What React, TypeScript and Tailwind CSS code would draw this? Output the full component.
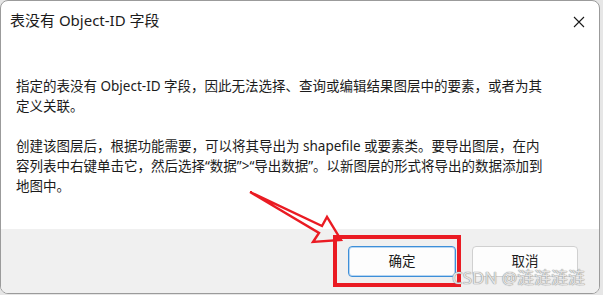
import React from 'react';

const font = {
  fontFamily: '"Noto Sans", "Noto Sans CJK SC", sans-serif',
};

function CloseIcon() {
  return (
    <svg width="12" height="12" viewBox="0 0 12 12" className="text-[#1a1a1a]">
      <path d="M1 1 L11 11 M11 1 L1 11" stroke="currentColor" strokeWidth="1.1" fill="none" />
    </svg>
  );
}

// red annotation: hollow arrow + box around the OK button
function Annotation() {
  return (
    <svg className="absolute inset-0 pointer-events-none" width="603" height="295" viewBox="0 0 603 295">
      <polygon
        points="250,192 322,226 327,217 341,240 313,242 319,233"
        fill="none"
        stroke="#ea1b23"
        strokeWidth="2.4"
        strokeLinejoin="miter"
      />
      <rect x="335" y="237" width="124" height="48" fill="none" stroke="#ea1b23" strokeWidth="4" />
    </svg>
  );
}

export default function App() {
  return (
    <div className="relative w-[603px] h-[295px] bg-[#e6e6e6] overflow-hidden" style={font}>
      <div className="w-[600px] h-[294px] flex flex-col bg-white border border-[#9b9b9b] rounded-[8px] overflow-hidden">
        {/* Title bar */}
        <div className="h-[38px] flex items-center justify-between pl-[9px] pr-[14px] shrink-0">
          <span className="text-[15px] text-[#1b1b1b] leading-none">表没有 Object-ID 字段</span>
          <span className="mt-[4px]">
            <CloseIcon />
          </span>
        </div>

        {/* Message */}
        <div className="pt-[37px] pl-[15px] text-[13.5px] leading-[20px] text-[#1b1b1b] whitespace-nowrap">
          <div>指定的表没有 Object-ID 字段，因此无法选择、查询或编辑结果图层中的要素，或者为其</div>
          <div>定义关联。</div>
          <div className="h-[20px]" />
          <div>创建该图层后，根据功能需要，可以将其导出为 shapefile 或要素类。要导出图层，在内</div>
          <div>容列表中右键单击它，然后选择“数据”&gt;“导出数据”。以新图层的形式将导出的数据添加到</div>
          <div>地图中。</div>
        </div>

        {/* Buttons */}
        <div className="mt-auto h-[64px] shrink-0 bg-[#f0f0f0] flex items-center justify-end gap-4 pr-[21px]">
          <button className="w-[108px] h-[31px] rounded-[4px] bg-[#fdfdfd] border border-[#3d8fd9] shadow-[inset_0_0_0_1px_#b7d6f2] text-[13.5px] text-[#1b1b1b]">
            确定
          </button>
          <button className="w-[106px] h-[31px] rounded-[4px] bg-[#fdfdfd] border border-[#d0d0d0] text-[13.5px] text-[#1b1b1b]">
            取消
          </button>
        </div>
      </div>

      <Annotation />

      {/* watermark */}
      <div className="absolute left-[452px] top-[268px] text-[17px] leading-[20px] text-[#e4e4e4] [text-shadow:0_0_1px_#8c8c8c,0_0_1px_#8c8c8c] whitespace-nowrap pointer-events-none">
        CSDN @涟涟涟涟
      </div>
    </div>
  );
}
